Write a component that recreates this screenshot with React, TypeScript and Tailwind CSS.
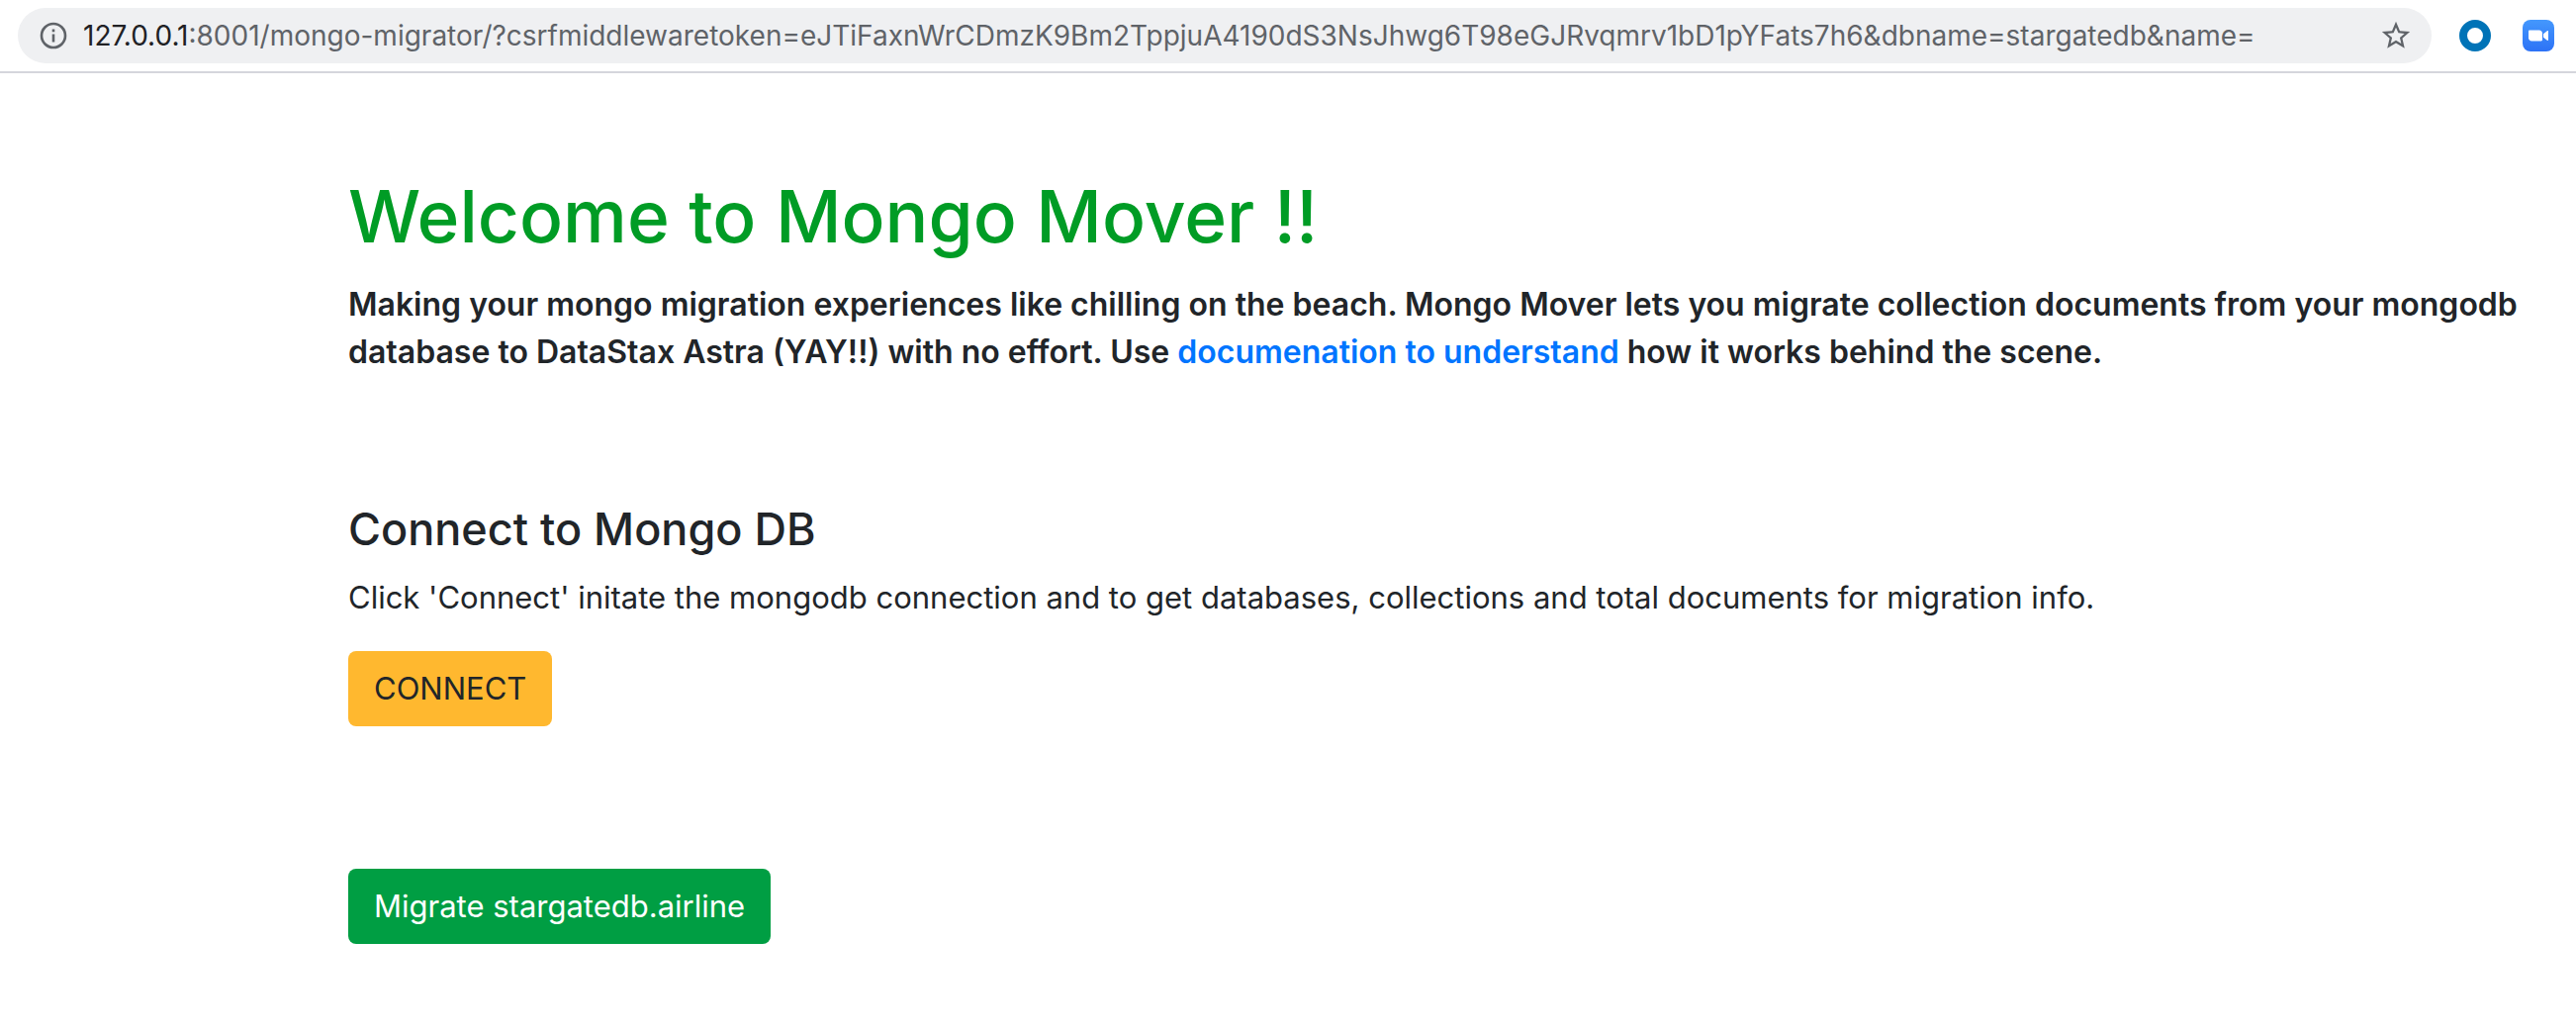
import React from "react";

function InfoIcon() {
  return (
    <svg viewBox="0 0 28 28" className="size-7 shrink-0" fill="none" aria-hidden="true">
      <circle cx="14" cy="14" r="12" stroke="#5f6368" strokeWidth="2.6" />
      <rect x="12.7" y="12.5" width="2.6" height="8" fill="#5f6368" />
      <rect x="12.7" y="7.5" width="2.6" height="2.8" fill="#5f6368" />
    </svg>
  );
}

function StarIcon() {
  return (
    <svg viewBox="0 0 24 24" className="size-[34px]" fill="#5f6368" aria-hidden="true">
      <path d="M22 9.24l-7.19-.62L12 2 9.19 8.63 2 9.24l5.46 4.73L5.82 21 12 17.27 18.18 21l-1.63-7.03L22 9.24zM12 15.4l-3.76 2.27 1-4.28-3.32-2.88 4.38-.38L12 6.1l1.71 4.04 4.38.38-3.32 2.88 1 4.28L12 15.4z" />
    </svg>
  );
}

function RingIcon() {
  return (
    <svg viewBox="0 0 32 32" className="size-8" fill="none" aria-hidden="true">
      <circle cx="16" cy="16" r="12" stroke="#0073b7" strokeWidth="8" />
    </svg>
  );
}

function VideoIcon() {
  return (
    <svg viewBox="0 0 32 32" className="size-8" aria-hidden="true">
      <defs>
        <linearGradient id="video-bg" x1="0" y1="0" x2="0" y2="1">
          <stop offset="0" stopColor="#4498fd" />
          <stop offset="1" stopColor="#2d72f6" />
        </linearGradient>
      </defs>
      <rect width="32" height="32" rx="8" fill="url(#video-bg)" />
      <path d="M6 11.7c0-.7.5-1.2 1.2-1.2h9.6c1.8 0 3.2 1.4 3.2 3.2v6.6c0 .7-.5 1.2-1.2 1.2H9.2C7.4 21.5 6 20.1 6 18.3z" fill="#fff" />
      <path d="M21 14.2l3.8-3c.6-.5 1.2-.3 1.2.5v8.6c0 .8-.6 1-1.2.5l-3.800-3z" fill="#fff" />
    </svg>
  );
}

function AddressBar() {
  return (
    <header className="flex items-center gap-7 border-b-2 border-[#d5d6dc] bg-white py-2 pr-[22px] pl-[18px]">
      <div className="flex h-14 min-w-0 flex-1 items-center rounded-full bg-[#eff0f2] pr-[19px] pl-[22px] text-[28px]">
        <InfoIcon />
        <label htmlFor="address" className="pl-4 text-[#202124]">
          127.0.0.1
        </label>
        <input
          id="address"
          type="text"
          spellCheck={false}
          className="min-w-0 flex-1 bg-transparent text-[#5f6368] outline-none"
          defaultValue=":8001/mongo-migrator/?csrfmiddlewaretoken=eJTiFaxnWrCDmzK9Bm2TppjuA4190dS3NsJhwg6T98eGJRvqmrv1bD1pYFats7h6&dbname=stargatedb&name="
        />
        <button type="button" aria-label="Bookmark this page">
          <StarIcon />
        </button>
      </div>
      <div className="flex items-center gap-8">
        <button type="button" aria-label="Ring extension">
          <RingIcon />
        </button>
        <button type="button" aria-label="Video extension">
          <VideoIcon />
        </button>
      </div>
    </header>
  );
}

export default function App() {
  return (
    <div className="min-h-screen bg-white font-['Inter',sans-serif] text-[#212529]">
      <AddressBar />
      <main className="pt-24 pr-8 pb-[90px] pl-[352px] text-[31px] leading-[48px]">
        <section>
          <h1 className="text-[73px] leading-[98px] font-medium text-[#009c25]">Welcome to Mongo Mover !!</h1>
          <p className="mt-4 text-[32px] leading-[48px] font-semibold">
            Making your mongo migration experiences like chilling on the beach. Mongo Mover lets you migrate collection
            documents from your mongodb database to DataStax Astra (YAY!!) with no effort. Use{" "}
            <a href="#documentation" className="text-[#0075ff]">
              documenation to understand
            </a>{" "}
            how it works behind the scene.
          </p>
        </section>
        <section className="mt-[126px]">
          <h3 className="text-[45px] leading-[58px] font-medium">Connect to Mongo DB</h3>
          <p className="mt-4">
            Click 'Connect' initate the mongodb connection and to get databases, collections and total documents for
            migration info.
          </p>
          <button type="button" className="mt-[30px] block h-[76px] rounded-lg bg-[#ffb82f] px-[26px]">
            CONNECT
          </button>
        </section>
        <button type="button" className="mt-36 block h-[76px] rounded-lg bg-[#009e43] px-[26px] text-white">
          Migrate stargatedb.airline
        </button>
      </main>
    </div>
  );
}
